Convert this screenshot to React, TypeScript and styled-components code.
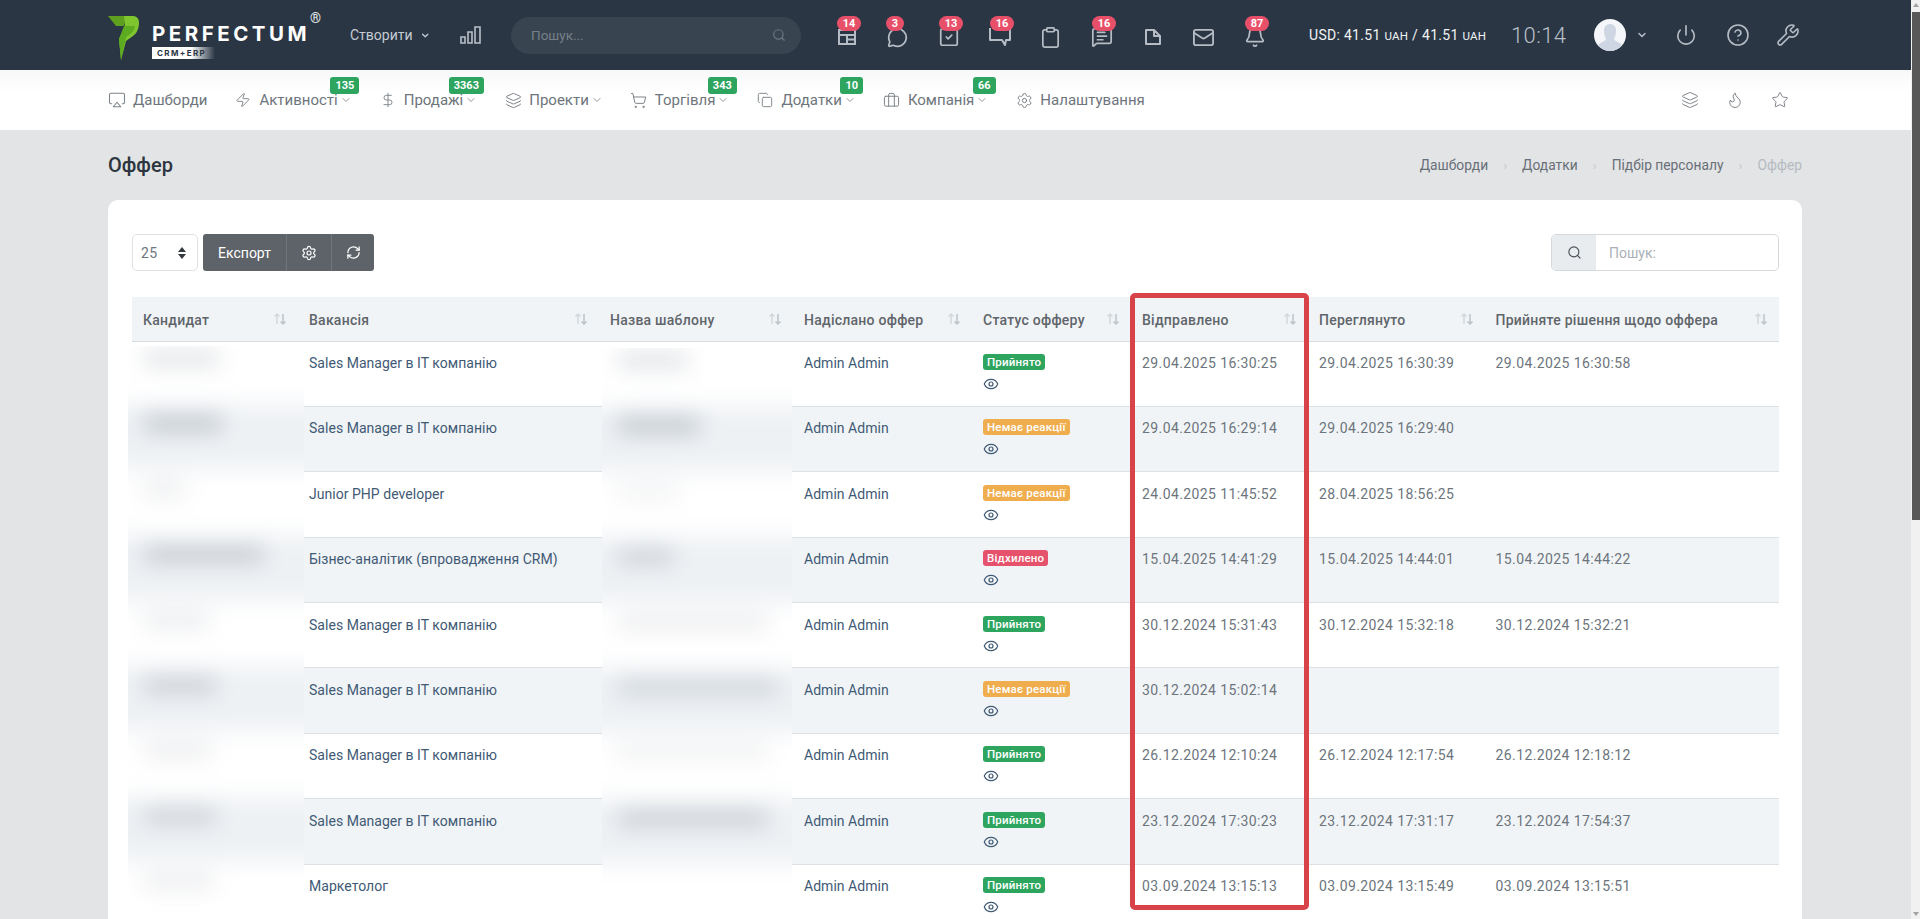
import React from "react";
import styled, { createGlobalStyle } from "styled-components";
import {
  Airplay,
  Bell,
  Briefcase,
  ChevronDown,
  CircleHelp,
  Clipboard,
  Copy,
  DollarSign,
  Eye,
  Flame,
  Layers,
  Mail,
  MessageCircle,
  MessageSquareText,
  Power,
  RefreshCw,
  Search,
  Settings,
  ShoppingCart,
  SquareCheck,
  Star,
  Wrench,
  Zap,
} from "lucide-react";

// ====================== Global ======================
const GlobalStyle = createGlobalStyle`
  html, body {
    margin: 0;
    padding: 0;
    height: 919px;
    overflow: hidden;
    background: #e2e4e6;
    font-family: Roboto, "Liberation Sans", sans-serif;
  }
  * { box-sizing: border-box; }
`;

const Page = styled.div`
  position: relative;
  width: 1920px;
  height: 919px;
  overflow: hidden;
`;

const Main = styled.div`
  width: 1911px;
`;

// ====================== Top bar ======================
const TopBar = styled.header`
  height: 70px;
  background: #2a3644;
  display: flex;
  align-items: center;
  padding-left: 108px;
`;

const Logo = styled.div`
  position: relative;
  width: 242px;
  height: 70px;
  flex: none;
`;

const LogoMark = styled.svg`
  position: absolute;
  left: 0;
  top: 16px;
`;

const LogoName = styled.span`
  position: absolute;
  left: 44px;
  top: 22px;
  font: 700 20.5px/24px Inter, sans-serif;
  letter-spacing: 3.5px;
  color: #fff;
`;

const LogoReg = styled.span`
  position: absolute;
  left: 202px;
  top: 10px;
  font: 400 14px/16px Roboto, sans-serif;
  color: #e8ebee;
`;

const LogoTag = styled.span`
  position: absolute;
  left: 44px;
  top: 47px;
  width: 63px;
  height: 12px;
  padding-left: 5px;
  background: linear-gradient(90deg, #fff 62%, rgba(255, 255, 255, 0) 100%);
  font: 700 8px/12px Inter, sans-serif;
  letter-spacing: 1.4px;
  color: #2a3644;
`;

const CreateButton = styled.div`
  display: flex;
  align-items: center;
  gap: 7px;
  width: 80px;
  flex: none;
  font-size: 14px;
  color: #c6ccd3;
  svg { color: #c6ccd3; }
`;

const ChartIcon = styled.svg`
  flex: none;
  margin-left: 30px;
`;

const SearchPill = styled.div`
  flex: none;
  width: 290px;
  height: 37px;
  margin-left: 30px;
  border-radius: 19px;
  background: #38444f;
  display: flex;
  align-items: center;
  justify-content: space-between;
  padding: 0 15px 0 20px;
  font-size: 13.5px;
  color: #76808b;
`;

const IconRow = styled.div`
  display: flex;
  flex: none;
  margin-left: 20px;
`;

const IconCell = styled.div`
  position: relative;
  width: 51px;
  height: 40px;
  display: flex;
  align-items: center;
  justify-content: center;
  color: #b5bcc4;
  padding-top: 4px;
`;

const CountDot = styled.span<{ $wide?: boolean }>`
  position: absolute;
  top: 1px;
  left: ${(p) => (p.$wide ? "16px" : "14px")};
  min-width: ${(p) => (p.$wide ? "24px" : "18px")};
  height: 15px;
  padding: 0 4px;
  border-radius: 8px;
  background: #e8506a;
  color: #fff;
  font: 700 11px/15px Roboto, sans-serif;
  text-align: center;
`;

const Rate = styled.div`
  flex: none;
  margin-left: 29px;
  width: 177px;
  font-size: 14px;
  letter-spacing: 0.3px;
  color: #f1f3f5;
  white-space: nowrap;
  small {
    font-size: 11.5px;
  }
`;

const Clock = styled.div`
  flex: none;
  margin-left: 25px;
  width: 56px;
  font-size: 22px;
  font-weight: 300;
  letter-spacing: 0.4px;
  color: #b9c0c8;
`;

const Avatar = styled.svg`
  flex: none;
  margin-left: 27px;
  border-radius: 50%;
  background: #f4f6f9;
`;

const UserChevron = styled.span`
  display: flex;
  margin-left: 10px;
  color: #b5bcc4;
`;

const TopAction = styled.span<{ $left: number }>`
  display: flex;
  flex: none;
  margin-left: ${(p) => p.$left}px;
  color: #b5bcc4;
`;

// ====================== Nav bar ======================
const NavBar = styled.nav`
  height: 60px;
  background: linear-gradient(180deg, #f8f8f9 0, #fff 22px);
  display: flex;
  align-items: center;
  padding-left: 108px;
  gap: 27px;
`;

const NavItem = styled.div`
  position: relative;
  display: flex;
  align-items: center;
  font-size: 15px;
  color: #6e757c;
  white-space: nowrap;
`;

const NavIcon = styled.span`
  width: 18px;
  flex: none;
  display: flex;
  justify-content: center;
  color: #7c8288;
`;

const NavLabel = styled.span`
  margin-left: 7px;
`;

const NavChevron = styled.span`
  display: flex;
  margin-left: 2px;
  color: #6e757c;
`;

const NavCount = styled.span<{ $left: number }>`
  position: absolute;
  top: -14px;
  left: ${(p) => p.$left}px;
  height: 17px;
  padding: 0 5px;
  border-radius: 3px;
  background: #2ea55f;
  color: #fff;
  font: 700 11px/17px Roboto, sans-serif;
`;

const NavTools = styled.div`
  margin-left: auto;
  margin-right: 122px;
  display: flex;
  gap: 27px;
  color: #7c8288;
`;

// ====================== Page title ======================
const TitleRow = styled.div`
  height: 70px;
  margin: 0 109px 0 108px;
  display: flex;
  align-items: center;
  justify-content: space-between;
`;

const Title = styled.h1`
  margin: 0;
  font-size: 20px;
  font-weight: 500;
  color: #2d3640;
`;

const Crumbs = styled.div`
  display: flex;
  align-items: center;
  font-size: 13.8px;
  color: #696f76;
`;

const CrumbSep = styled.span`
  width: 34px;
  text-align: center;
  color: #c4c8cc;
  font-size: 13px;
`;

const CrumbLast = styled.span`
  color: #b5bac0;
`;

// ====================== Card + toolbar ======================
const Card = styled.section`
  margin: 0 109px 0 108px;
  height: 800px;
  padding: 34px 23px 0 24px;
  background: #fff;
  border-radius: 10px 10px 0 0;
`;

const Toolbar = styled.div`
  display: flex;
  align-items: center;
  height: 37px;
`;

const LengthSelect = styled.div`
  width: 66px;
  height: 37px;
  display: flex;
  align-items: center;
  justify-content: space-between;
  padding: 0 11px 0 8px;
  border: 1px solid #dfe2e6;
  border-radius: 5px;
  font-size: 14px;
  letter-spacing: 0.3px;
  color: #6c757d;
`;

const ButtonGroup = styled.div`
  display: flex;
  height: 37px;
  margin-left: 5px;
  border-radius: 3px;
  overflow: hidden;
  background: #5d6368;
  color: #fff;
  font-size: 14px;
`;

const ToolButton = styled.div<{ $w: number }>`
  width: ${(p) => p.$w}px;
  display: flex;
  align-items: center;
  justify-content: center;
  border-left: 1px solid #71767b;
  &:first-child { border-left: 0; }
`;

const TableSearch = styled.div`
  margin-left: auto;
  width: 228px;
  height: 37px;
  display: flex;
  border: 1px solid #d5d9dd;
  border-radius: 5px;
  overflow: hidden;
`;

const TableSearchIcon = styled.div`
  width: 44px;
  flex: none;
  background: #e9ecef;
  color: #454c53;
  display: flex;
  align-items: center;
  justify-content: center;
`;

const TableSearchText = styled.div`
  flex: 1;
  padding-left: 13px;
  font-size: 14px;
  line-height: 36px;
  color: #aab0b6;
`;

// ====================== Table ======================
const Table = styled.table`
  width: 1647px;
  margin-top: 26px;
  table-layout: fixed;
  border-collapse: collapse;
`;

const Col = styled.col<{ $w: number }>`
  width: ${(p) => p.$w}px;
`;

const Th = styled.th`
  position: relative;
  height: 44px;
  padding: 2px 11px 0;
  background: #f1f4f7;
  border-bottom: 1px solid #d8dde2;
  text-align: left;
  font-size: 14px;
  font-weight: 500;
  letter-spacing: 0.25px;
  color: #5f656b;
  white-space: nowrap;
`;

const SortIcon = styled.svg`
  position: absolute;
  right: 11px;
  top: 15px;
`;

const Tr = styled.tr<{ $striped: boolean }>`
  height: 65.4px;
  background: ${(p) => (p.$striped ? "#f1f4f7" : "#fff")};
`;

const Td = styled.td`
  padding: 12.6px 11px 0;
  vertical-align: top;
  border-bottom: 1px solid #dde1e5;
  font-size: 14px;
  line-height: 18px;
  letter-spacing: 0.4px;
  color: #6c757d;
  white-space: nowrap;
`;

const LinkText = styled.span`
  color: #3f5a75;
  letter-spacing: 0.03px;
`;

const StatusBadge = styled.span<{ $tone: string }>`
  display: block;
  width: max-content;
  height: 16px;
  padding: 0 4px;
  border-radius: 3px;
  background: ${(p) => p.$tone};
  color: #fff;
  font-size: 11.5px;
  font-weight: 500;
  line-height: 16px;
  letter-spacing: 0.2px;
`;

const EyeLine = styled.div`
  display: flex;
  margin-top: 6px;
  color: #3f5a75;
`;

// ====================== Blurred cells ======================
const BlurPatch = styled.div<{ $left: number; $top: number; $w: number }>`
  position: absolute;
  left: ${(p) => p.$left}px;
  top: ${(p) => p.$top}px;
  width: ${(p) => p.$w}px;
  height: 569px;
  overflow: hidden;
  background: #fff;
`;

const BlurInner = styled.div`
  position: absolute;
  left: -30px;
  right: -30px;
  top: -7px;
  filter: blur(11px);
`;

const BlurRow = styled.div<{ $striped: boolean }>`
  height: 65.4px;
  padding: 12px 0 0 46px;
  background: ${(p) => (p.$striped ? "#eef1f4" : "#fff")};
`;

const BlurBar = styled.div<{ $w: number; $shade: number }>`
  width: ${(p) => p.$w}px;
  height: 15px;
  background: rgb(120, 130, 142, ${(p) => p.$shade});
`;

// ====================== Marker + scrollbar ======================
const Marker = styled.div`
  position: absolute;
  left: 1130px;
  top: 293px;
  width: 179px;
  height: 617px;
  border: 5px solid #d8434a;
  border-radius: 5px;
`;

const ScrollTrack = styled.div`
  position: absolute;
  top: 0;
  right: 0;
  width: 9px;
  height: 919px;
  background: #f1f1f1;
`;

const ScrollThumb = styled.div`
  position: absolute;
  top: 12px;
  left: 1px;
  right: 0;
  height: 508px;
  background: #585858;
`;

const ScrollArrow = styled.div<{ $down?: boolean }>`
  position: absolute;
  left: 2px;
  ${(p) => (p.$down ? "bottom: 3px;" : "top: 3px;")}
  border-left: 3px solid transparent;
  border-right: 3px solid transparent;
  ${(p) => (p.$down ? "border-top" : "border-bottom")}: 4px solid #a3a3a3;
`;

// ====================== Data ======================
const GREEN = "#2ea55f";
const ORANGE = "#f0ad4e";
const RED = "#e6526b";

const SALES = "Sales Manager в IT компанію";

const columns = [
  { title: "Кандидат", width: 166 },
  { title: "Вакансія", width: 301 },
  { title: "Назва шаблону", width: 194 },
  { title: "Надіслано оффер", width: 179 },
  { title: "Статус офферу", width: 159 },
  { title: "Відправлено", width: 177 },
  { title: "Переглянуто", width: 176.5 },
  { title: "Прийняте рішення щодо оффера", width: 294.5 },
];

const rows = [
  { job: SALES, status: "Прийнято", tone: GREEN, sent: "29.04.2025 16:30:25", seen: "29.04.2025 16:30:39", done: "29.04.2025 16:30:58" },
  { job: SALES, status: "Немає реакції", tone: ORANGE, sent: "29.04.2025 16:29:14", seen: "29.04.2025 16:29:40", done: "" },
  { job: "Junior PHP developer", status: "Немає реакції", tone: ORANGE, sent: "24.04.2025 11:45:52", seen: "28.04.2025 18:56:25", done: "" },
  { job: "Бізнес-аналітик (впровадження CRM)", status: "Відхилено", tone: RED, sent: "15.04.2025 14:41:29", seen: "15.04.2025 14:44:01", done: "15.04.2025 14:44:22" },
  { job: SALES, status: "Прийнято", tone: GREEN, sent: "30.12.2024 15:31:43", seen: "30.12.2024 15:32:18", done: "30.12.2024 15:32:21" },
  { job: SALES, status: "Немає реакції", tone: ORANGE, sent: "30.12.2024 15:02:14", seen: "", done: "" },
  { job: SALES, status: "Прийнято", tone: GREEN, sent: "26.12.2024 12:10:24", seen: "26.12.2024 12:17:54", done: "26.12.2024 12:18:12" },
  { job: SALES, status: "Прийнято", tone: GREEN, sent: "23.12.2024 17:30:23", seen: "23.12.2024 17:31:17", done: "23.12.2024 17:54:37" },
  { job: "Маркетолог", status: "Прийнято", tone: GREEN, sent: "03.09.2024 13:15:13", seen: "03.09.2024 13:15:49", done: "03.09.2024 13:15:51" },
];

const blurNames = [
  [75, 0.24], [78, 0.42], [40, 0.15], [120, 0.38], [65, 0.16], [72, 0.34], [68, 0.15], [72, 0.3], [70, 0.15],
];
const blurTemplates = [
  [70, 0.25], [82, 0.42], [60, 0.1], [56, 0.3], [150, 0.15], [160, 0.28], [150, 0.12], [150, 0.34], [0, 0],
];

const TableGlyph = () => (
  <svg width="20" height="20" viewBox="0 0 20 20" fill="none" stroke="currentColor" strokeWidth="2">
    <path d="M2 3h16v14H2zM2 8h16M10 8v9M10 12.5h8" />
  </svg>
);

const ChatGlyph = () => (
  <svg width="24" height="22" viewBox="0 0 24 22" fill="none" stroke="currentColor" strokeWidth="2" strokeLinejoin="round">
    <path d="M2 2v12h12l3 5 1-5h4V2" />
  </svg>
);

const FileGlyph = () => (
  <svg width="18" height="18" viewBox="0 0 18 18" fill="none" stroke="currentColor" strokeWidth="2" strokeLinejoin="round">
    <path d="M2 2h8l6 6v8H2zM10 2v6h6" />
  </svg>
);

const SortGlyph = () => (
  <SortIcon width="14" height="14" viewBox="0 0 14 14" fill="none" strokeWidth="1.5">
    <path d="M4 12V2M1.5 4.5 4 2l2.5 2.5" stroke="#d3d8dc" />
    <path d="M10 2v10M7.5 9.5 10 12l2.5-2.5" stroke="#bcc3c9" />
  </SortIcon>
);

const topIcons: { icon: React.ReactNode; count?: string }[] = [
  { icon: <TableGlyph />, count: "14" },
  { icon: <MessageCircle size={21} strokeWidth={2} />, count: "3" },
  { icon: <SquareCheck size={22} strokeWidth={1.9} />, count: "13" },
  { icon: <ChatGlyph />, count: "16" },
  { icon: <Clipboard size={23} strokeWidth={1.8} /> },
  { icon: <MessageSquareText size={22} strokeWidth={1.9} />, count: "16" },
  { icon: <FileGlyph /> },
  { icon: <Mail size={23} strokeWidth={1.9} /> },
  { icon: <Bell size={22} strokeWidth={1.9} />, count: "87" },
];

const navItems = [
  { icon: <Airplay size={18} strokeWidth={1.4} />, label: "Дашборди" },
  { icon: <Zap size={16} strokeWidth={1.4} />, label: "Активності", count: "135", countLeft: 96, arrow: true },
  { icon: <DollarSign size={16} strokeWidth={1.4} />, label: "Продажі", count: "3363", countLeft: 70, arrow: true },
  { icon: <Layers size={17} strokeWidth={1.4} />, label: "Проекти", arrow: true },
  { icon: <ShoppingCart size={17} strokeWidth={1.4} />, label: "Торгівля", count: "343", countLeft: 78, arrow: true },
  { icon: <Copy size={16} strokeWidth={1.4} />, label: "Додатки", count: "10", countLeft: 84, arrow: true },
  { icon: <Briefcase size={17} strokeWidth={1.4} />, label: "Компанія", count: "66", countLeft: 90, arrow: true },
  { icon: <Settings size={17} strokeWidth={1.4} />, label: "Налаштування" },
];

const App: React.FC = () => {
  return (
    <Page>
      <GlobalStyle />
      <Main>
        <TopBar>
          <Logo>
            <LogoMark width="32" height="44" viewBox="0 0 32 44">
              <path d="M0 0h18l-2 10H8z" fill="#5f9f1f" />
              <path d="M16 0h9c4 0 6 3 6 7 0 5-2 10-6 13l-7 5-5 19-2-21 6-13z" fill="#7fc52e" />
              <path d="M16 10h11c-1 5-4 8-9 11l-5 23-2-21z" fill="#5cab20" />
            </LogoMark>
            <LogoName>PERFECTUM</LogoName>
            <LogoReg>®</LogoReg>
            <LogoTag>CRM+ERP</LogoTag>
          </Logo>
          <CreateButton>
            Створити
            <ChevronDown size={11} strokeWidth={3} />
          </CreateButton>
          <ChartIcon width="21" height="18" viewBox="0 0 21 18" fill="none" stroke="#b9c0c8" strokeWidth="1.6">
            <path d="M1 11h4v6H1zM8 6h4v11H8zM15 1h5v16h-5z" />
          </ChartIcon>
          <SearchPill>
            Пошук...
            <Search size={14} color="#6d7781" />
          </SearchPill>
          <IconRow>
            {topIcons.map((item, i) => (
              <IconCell key={i}>
                {item.icon}
                {item.count && <CountDot $wide={item.count.length > 1}>{item.count}</CountDot>}
              </IconCell>
            ))}
          </IconRow>
          <Rate>
            USD: 41.51 <small>UAH</small> / 41.51 <small>UAH</small>
          </Rate>
          <Clock>10:14</Clock>
          <Avatar width="32" height="32" viewBox="0 0 32 32">
            <path d="M16 5c-4 0-6 3-6 7 0 3 1 6 2 8 0 2-5 3-7 5-1 1-1 4-1 7h24c0-3 0-6-1-7-2-2-7-3-7-5 1-2 2-5 2-8 0-4-2-7-6-7z" fill="#cdd6e2" />
          </Avatar>
          <UserChevron>
            <ChevronDown size={12} strokeWidth={3} />
          </UserChevron>
          <TopAction $left={27}>
            <Power size={22} strokeWidth={1.8} />
          </TopAction>
          <TopAction $left={29}>
            <CircleHelp size={24} strokeWidth={1.6} />
          </TopAction>
          <TopAction $left={26}>
            <Wrench size={24} strokeWidth={1.6} />
          </TopAction>
        </TopBar>

        <NavBar>
          {navItems.map((item) => (
            <NavItem key={item.label}>
              <NavIcon>{item.icon}</NavIcon>
              <NavLabel>{item.label}</NavLabel>
              {item.arrow && (
                <NavChevron>
                  <ChevronDown size={12} strokeWidth={1.5} />
                </NavChevron>
              )}
              {item.count && <NavCount $left={item.countLeft ?? 0}>{item.count}</NavCount>}
            </NavItem>
          ))}
          <NavTools>
            <Layers size={18} strokeWidth={1.3} />
            <Flame size={18} strokeWidth={1.3} />
            <Star size={18} strokeWidth={1.3} />
          </NavTools>
        </NavBar>

        <TitleRow>
          <Title>Оффер</Title>
          <Crumbs>
            Дашборди
            <CrumbSep>›</CrumbSep>
            Додатки
            <CrumbSep>›</CrumbSep>
            Підбір персоналу
            <CrumbSep>›</CrumbSep>
            <CrumbLast>Оффер</CrumbLast>
          </Crumbs>
        </TitleRow>

        <Card>
          <Toolbar>
            <LengthSelect>
              25
              <svg width="8" height="12" viewBox="0 0 8 12" fill="#343a40">
                <path d="M4 0l4 5H0zM4 12 0 7h8z" />
              </svg>
            </LengthSelect>
            <ButtonGroup>
              <ToolButton $w={83}>Експорт</ToolButton>
              <ToolButton $w={45}>
                <Settings size={16} strokeWidth={1.8} />
              </ToolButton>
              <ToolButton $w={43}>
                <RefreshCw size={15} strokeWidth={2} />
              </ToolButton>
            </ButtonGroup>
            <TableSearch>
              <TableSearchIcon>
                <Search size={15} strokeWidth={1.8} />
              </TableSearchIcon>
              <TableSearchText>Пошук:</TableSearchText>
            </TableSearch>
          </Toolbar>

          <Table>
            <colgroup>
              {columns.map((c) => (
                <Col key={c.title} $w={c.width} />
              ))}
            </colgroup>
            <thead>
              <tr>
                {columns.map((c) => (
                  <Th key={c.title}>
                    {c.title}
                    <SortGlyph />
                  </Th>
                ))}
              </tr>
            </thead>
            <tbody>
              {rows.map((r, i) => (
                <Tr key={i} $striped={i % 2 === 1}>
                  <Td />
                  <Td>
                    <LinkText>{r.job}</LinkText>
                  </Td>
                  <Td />
                  <Td>
                    <LinkText>Admin Admin</LinkText>
                  </Td>
                  <Td>
                    <StatusBadge $tone={r.tone}>{r.status}</StatusBadge>
                    <EyeLine>
                      <Eye size={16} strokeWidth={1.8} />
                    </EyeLine>
                  </Td>
                  <Td>{r.sent}</Td>
                  <Td>{r.seen}</Td>
                  <Td>{r.done}</Td>
                </Tr>
              ))}
            </tbody>
          </Table>
        </Card>
      </Main>

      <BlurPatch $left={128} $top={346} $w={176}>
        <BlurInner>
          {blurNames.map(([w, shade], i) => (
            <BlurRow key={i} $striped={i % 2 === 1}>
              <BlurBar $w={w} $shade={shade} />
            </BlurRow>
          ))}
        </BlurInner>
      </BlurPatch>
      <BlurPatch $left={602} $top={348} $w={190}>
        <BlurInner>
          {blurTemplates.map(([w, shade], i) => (
            <BlurRow key={i} $striped={i % 2 === 1}>
              <BlurBar $w={w} $shade={shade} />
            </BlurRow>
          ))}
        </BlurInner>
      </BlurPatch>

      <Marker />

      <ScrollTrack>
        <ScrollArrow />
        <ScrollThumb />
        <ScrollArrow $down />
      </ScrollTrack>
    </Page>
  );
};

export default App;
